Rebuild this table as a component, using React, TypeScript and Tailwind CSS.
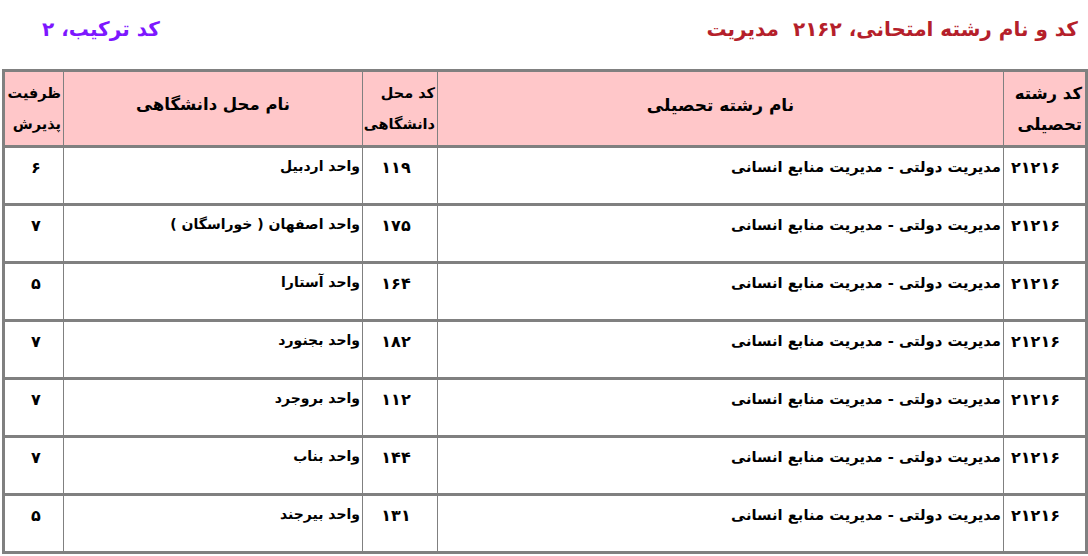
import * as React from 'react';

type Row = {
  code: string;
  field: string;
  placeCode: string;
  place: string;
  capacity: string;
};

const ROWS: Row[] = [
  { code: '۲۱۲۱۶', field: 'مدیریت دولتی - مدیریت منابع انسانی', placeCode: '۱۱۹', place: 'واحد اردبیل', capacity: '۶' },
  { code: '۲۱۲۱۶', field: 'مدیریت دولتی - مدیریت منابع انسانی', placeCode: '۱۷۵', place: 'واحد اصفهان ( خوراسگان )', capacity: '۷' },
  { code: '۲۱۲۱۶', field: 'مدیریت دولتی - مدیریت منابع انسانی', placeCode: '۱۶۴', place: 'واحد آستارا', capacity: '۵' },
  { code: '۲۱۲۱۶', field: 'مدیریت دولتی - مدیریت منابع انسانی', placeCode: '۱۸۲', place: 'واحد بجنورد', capacity: '۷' },
  { code: '۲۱۲۱۶', field: 'مدیریت دولتی - مدیریت منابع انسانی', placeCode: '۱۱۲', place: 'واحد بروجرد', capacity: '۷' },
  { code: '۲۱۲۱۶', field: 'مدیریت دولتی - مدیریت منابع انسانی', placeCode: '۱۴۴', place: 'واحد بناب', capacity: '۷' },
  { code: '۲۱۲۱۶', field: 'مدیریت دولتی - مدیریت منابع انسانی', placeCode: '۱۳۱', place: 'واحد بیرجند', capacity: '۵' },
];

// horizontal rules are heavy, column rules are hairlines
const TH_CN = 'bg-[#ffc7c9] border-x border-x-[#808080] border-y-[3px] border-y-[#808080] font-bold text-black';
const TD_CN = 'border-x border-x-[#808080] border-y-[3px] border-y-[#808080] align-top h-[58px] pt-[8px] font-bold text-black';

export default function App() {
  return (
    <div dir="rtl" className="w-[1088px] h-[556px] bg-white font-['DejaVu_Sans',sans-serif] overflow-hidden">
      <div className="flex items-center justify-between h-[58px] pr-[10px] pl-[42px]">
        <div className="text-[20px] font-bold text-[#b51f2b] whitespace-pre">کد و نام رشته امتحانی، ۲۱۶۲  مدیریت</div>
        <div className="text-[20px] font-bold text-[#7d17ff]">کد ترکیب، ۲</div>
      </div>

      <table className="ml-[3px] mt-[11px] w-[1083px] table-fixed border-collapse border-[3px] border-[#808080]">
        <colgroup>
          <col className="w-[83px]" />
          <col className="w-[566px]" />
          <col className="w-[75px]" />
          <col className="w-[299px]" />
          <col className="w-[60px]" />
        </colgroup>
        <thead>
          <tr className="h-[76px]">
            <th className={`${TH_CN} text-right pr-[3px] text-[16.5px] leading-[31px]`}>
              کد رشته
              <br />
              تحصیلی
            </th>
            <th className={`${TH_CN} text-center text-[17px] pb-[6px]`}>نام رشته تحصیلی</th>
            <th className={`${TH_CN} text-right pr-[2px] text-[14.5px] leading-[31px]`}>
              کد محل
              <br />
              دانشگاهی
            </th>
            <th className={`${TH_CN} text-center text-[16.5px] pb-[6px]`}>نام محل دانشگاهی</th>
            <th className={`${TH_CN} text-right pr-[2px] text-[14.5px] leading-[31px]`}>
              ظرفیت
              <br />
              پذیرش
            </th>
          </tr>
        </thead>
        <tbody>
          {ROWS.map((row, i) => (
            <tr key={i}>
              <td className={`${TD_CN} text-center pr-[18px] text-[16px]`}>{row.code}</td>
              <td className={`${TD_CN} text-right pr-[2px] text-[14.75px]`}>{row.field}</td>
              <td className={`${TD_CN} text-center pr-[8px] text-[16px]`}>{row.placeCode}</td>
              <td className={`${TD_CN} text-right pr-[2px] text-[14px]`}>{row.place}</td>
              <td className={`${TD_CN} text-center pl-[4px] text-[16px]`}>{row.capacity}</td>
            </tr>
          ))}
        </tbody>
      </table>
    </div>
  );
}
